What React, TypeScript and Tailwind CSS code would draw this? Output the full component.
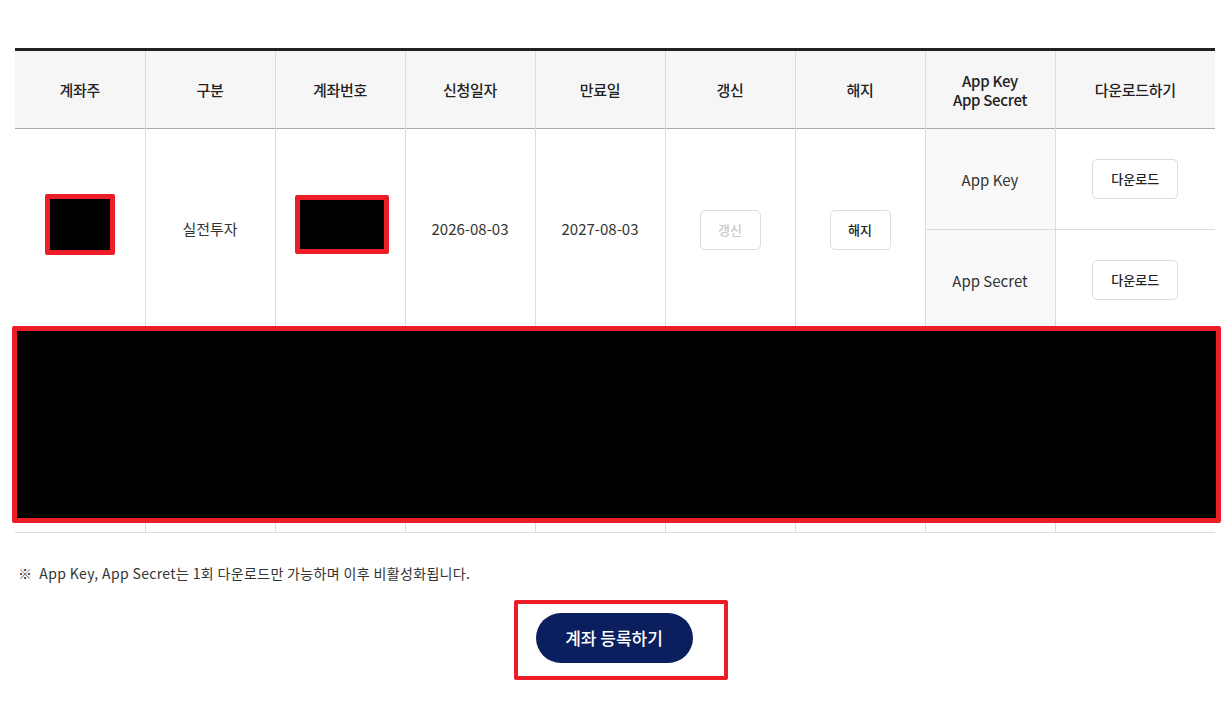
import React from 'react';

const headers = ['계좌주', '구분', '계좌번호', '신청일자', '만료일', '갱신', '해지', 'App Key\nApp Secret', '다운로드하기'];

const Redacted = ({ className }: { className: string }) => (
  <div className={`inline-block bg-black border-[5px] border-[#ec1d27] rounded-[2px] ${className}`} />
);

const SmallButton = ({ label, disabled, wide }: { label: string; disabled?: boolean; wide?: boolean }) => (
  <button
    className={`h-10 ${wide ? 'w-[86px]' : 'w-[61px]'} rounded-[5px] border border-[#dcdcdc] bg-white text-[13px] font-medium ${
      disabled ? 'text-[#c8c8c8]' : 'text-[#222]'
    }`}
  >
    {label}
  </button>
);

export default function App() {
  return (
    <div
      className="w-[1228px] h-[702px] bg-white pt-12 text-[#333]"
      style={{ fontFamily: '"Noto Sans CJK KR", "Noto Sans", sans-serif' }}
    >
      <div className="relative ml-[15px] w-[1200px]">
        <table className="w-[1200px] table-fixed border-collapse border-t-[3px] border-t-[#222]">
          <colgroup>
            {headers.map((h, i) => (
              <col key={h} className={i === 8 ? 'w-[160px]' : 'w-[130px]'} />
            ))}
          </colgroup>
          <thead>
            <tr className="h-[79px] bg-[#f6f6f6] border-b border-b-[#ababab]">
              {headers.map((h, i) => (
                <th
                  key={h}
                  className={`text-[15px] font-medium text-[#222] leading-[19px] whitespace-pre-line tracking-[-0.3px] ${
                    i < 8 ? 'border-r border-r-[#dcdcdc]' : ''
                  }`}
                >
                  {h}
                </th>
              ))}
            </tr>
          </thead>
          <tbody className="text-[15px] text-[#333]">
            <tr className="h-[101px]">
              <td rowSpan={2} className="border-r border-[#dcdcdc] text-center align-middle">
                <Redacted className="w-[70px] h-[61px] mb-1" />
              </td>
              <td rowSpan={2} className="border-r border-[#dcdcdc] text-center">실전투자</td>
              <td rowSpan={2} className="border-r border-[#dcdcdc] text-center">
                <Redacted className="w-[94px] h-[59px] mb-1 ml-1" />
              </td>
              <td rowSpan={2} className="border-r border-[#dcdcdc] text-center">2026-08-03</td>
              <td rowSpan={2} className="border-r border-[#dcdcdc] text-center">2027-08-03</td>
              <td rowSpan={2} className="border-r border-[#dcdcdc] text-center">
                <SmallButton label="갱신" disabled />
              </td>
              <td rowSpan={2} className="border-r border-[#dcdcdc] text-center">
                <SmallButton label="해지" />
              </td>
              <td className="border-r border-b border-[#dcdcdc] bg-[#f9f9f9] text-center pt-[2px]">App Key</td>
              <td className="border-b border-[#dcdcdc] text-center">
                <SmallButton label="다운로드" wide />
              </td>
            </tr>
            <tr className="h-[101px]">
              <td className="border-r border-[#dcdcdc] bg-[#f9f9f9] text-center pt-[2px]">App Secret</td>
              <td className="text-center">
                <SmallButton label="다운로드" wide />
              </td>
            </tr>
            <tr className="h-[202px] border-t border-b border-[#dcdcdc]">
              {headers.map((h, i) => (
                <td key={h} className={i < 8 ? 'border-r border-r-[#dcdcdc]' : ''} />
              ))}
            </tr>
          </tbody>
        </table>
        <div className="absolute left-[-3px] top-[278px] w-[1209px] h-[197px] bg-black border-[5px] border-[#ec1d27] rounded-[2px]" />
      </div>

      <p className="ml-[18px] mt-[30px] text-[14px] text-[#333] tracking-[0.35px]">
        ※&nbsp; App Key, App Secret는 1회 다운로드만 가능하며 이후 비활성화됩니다.
      </p>

      <div className="relative mt-[29px] flex justify-center">
        <div className="absolute left-[514px] top-[-13px] w-[214px] h-[80px] border-4 border-[#ec1d27] rounded-[2px]" />
        <button className="relative h-[50px] w-[157px] rounded-full bg-[#0b1f5e] text-[17px] font-medium text-white">
          계좌 등록하기
        </button>
      </div>
    </div>
  );
}
